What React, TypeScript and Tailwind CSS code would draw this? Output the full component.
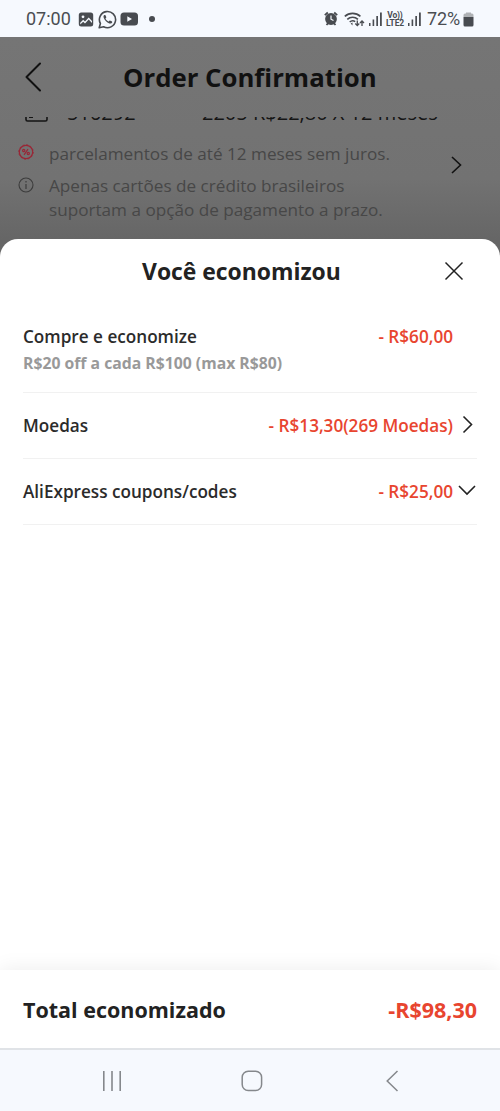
import React from 'react';

interface SavingRow {
    label: string;
    note?: string;
    amount: string;
    arrow?: 'right' | 'down';
    height: string;
}

const ROWS: SavingRow[] = [
    { label: 'Compre e economize', note: 'R$20 off a cada R$100 (max R$80)', amount: '- R$60,00', height: 'h-[90px] pt-[4px]' },
    { label: 'Moedas', amount: '- R$13,30(269 Moedas)', arrow: 'right', height: 'h-[66px] pb-[1px]' },
    { label: 'AliExpress coupons/codes', amount: '- R$25,00', arrow: 'down', height: 'h-[66px] pb-[1px]' },
];

const SignalBars: React.FC = () => (
    <svg width="13" height="14" viewBox="0 0 13 14" fill="#4a4d52">
        <rect x="0" y="11" width="1.5" height="3" />
        <rect x="3.6" y="7.5" width="1.6" height="6.5" />
        <rect x="7.3" y="4" width="1.7" height="10" />
        <rect x="11" y="0.5" width="1.8" height="13.5" />
    </svg>
);

const StatusBar: React.FC = () => (
    <header className="flex h-[37px] shrink-0 items-center bg-[#f6f9fe] pr-[26px] pl-[26px] font-['Roboto',sans-serif] text-[#4a4d52]">
        <span className="w-[52px] text-[18px]">07:00</span>
        <svg className="mt-[1px]" width="16" height="15" viewBox="0 0 16 15">
            <rect x="0.8" y="0.5" width="14.4" height="14" rx="2.5" fill="#484b50" />
            <circle cx="5" cy="4.8" r="1.4" fill="#f6f9fe" />
            <path d="M2.2 10.8 5.2 7.8 7 9.4 10.7 5.4 14 9V12.5H2.2Z" fill="#f6f9fe" />
            <path d="M2.2 12.5 5.2 9.8 7 11.4 10.7 7.4 14 11V13H2.2Z" fill="#484b50" />
        </svg>
        <svg className="mt-[1px] ml-[4px]" width="19" height="19" viewBox="0 0 19 19" fill="none">
            <path d="M1.2 17.8 2.4 13.5A8.1 8.1 0 1 1 5.6 16.7Z" stroke="#484b50" strokeWidth="1.6" strokeLinejoin="round" />
            <path d="M6.3 5.1c-.9.6-1 1.8-.5 3 1 2.5 3 4.5 5.5 5.4 1.4.4 2.7-.2 3-1.5 0-.6-2-1.6-2.5-1.6-.6 0-.8 1.1-1.3 1.1-1-.3-2.6-1.8-3-2.9 0-.5.8-.7.8-1.3 0-.5-.8-2.2-1.2-2.3Z" fill="#484b50" />
        </svg>
        <svg className="ml-[3px]" width="19" height="14" viewBox="0 0 19 14">
            <rect x="0.5" y="0.5" width="17.5" height="13" rx="3.5" fill="#484b50" />
            <path d="M7.3 4.2 12 7 7.3 9.8Z" fill="#f6f9fe" />
        </svg>
        <span className="ml-[10px] size-[6px] rounded-full bg-[#484b50]" />

        <svg className="ml-auto" width="14" height="15" viewBox="0 0 14 15">
            <circle cx="7" cy="8" r="5.9" fill="#484b50" />
            <path d="M0.8 4.2 3.8 1.5M13.2 4.2 10.2 1.5M2.5 14 4 12.4M11.5 14 10 12.4" stroke="#484b50" strokeWidth="1.8" />
            <path d="M7 4.5V8.2L9.5 9.5" stroke="#f6f9fe" strokeWidth="1.2" fill="none" />
        </svg>
        <svg className="mt-[1px] ml-[6px]" width="21" height="16" viewBox="0 0 21 16" fill="none" stroke="#484b50">
            <path d="M0.8 5.4a11.5 11.5 0 0 1 15.6 0M3.3 8.3a7.8 7.8 0 0 1 10.6 0M5.7 11a4.5 4.5 0 0 1 5.5-.4" strokeWidth="1.6" />
            <path d="M8.5 11.5 6.7 12.5 8.5 14.5Z" fill="#484b50" stroke="none" />
            <path d="M13.3 9.5V14.5M11.3 12.5 13.3 14.6 15.3 12.5M18 15V10M16 12 18 9.9 20 12" strokeWidth="1.3" />
        </svg>
        <div className="ml-[4px]"><SignalBars /></div>
        <div className="mt-[1px] ml-[3px] flex w-[20px] flex-col items-center text-[8.5px] leading-[8px] font-bold tracking-[-0.2px]">
            <span>Vo))</span>
            <span>LTE2</span>
        </div>
        <div className="ml-[3px]"><SignalBars /></div>
        <span className="ml-[6px] w-[36px] text-[18px] tracking-[-0.1px]">72%</span>
        <svg className="mt-[1px]" width="11" height="15" viewBox="0 0 11 15">
            <path d="M3 1.5V.5H8V1.5H9A1.5 1.5 0 0 1 10.5 3V5H.5V3A1.5 1.5 0 0 1 2 1.5Z" fill="#afb2b5" />
            <path d="M.5 5H10.5V13A1.5 1.5 0 0 1 9 14.5H2A1.5 1.5 0 0 1 .5 13Z" fill="#484b50" />
        </svg>
    </header>
);

const OrderBackdrop: React.FC = () => (
    <section className="flex h-[202px] shrink-0 flex-col bg-linear-to-b from-[#757575] via-[#727272] via-70% to-[#666666]">
        <div className="flex h-[80px] shrink-0 items-center pl-[24px]">
            <svg width="19" height="30" viewBox="0 0 19 30" fill="none" stroke="#111" strokeWidth="2" strokeLinecap="round" strokeLinejoin="round">
                <path d="M16 1.5 2.5 15 16 28.5" />
            </svg>
            <h1 className="mt-[1px] ml-[80px] text-[25.75px] font-bold whitespace-nowrap text-[#111]">Order Confirmation</h1>
        </div>
        {/* Card row scrolled halfway under the title bar */}
        <div className="flex h-[10px] shrink-0 items-end overflow-hidden pl-[17px] text-[20px] leading-[16px] text-[#151515]">
            <svg className="shrink-0" width="38" height="16" viewBox="0 0 38 16" fill="none" stroke="#151515">
                <rect x="9" y="-2" width="21" height="12" rx="1.5" strokeWidth="1.6" />
                <path d="M12 6.5H16" strokeWidth="1" />
            </svg>
            <span className="mb-[6px] ml-[12px] w-[135px] shrink-0">516292</span>
            <span className="mb-[6px] whitespace-nowrap">2205 R$22,80 X 12 meses</span>
        </div>
        <div className="flex text-[17.15px] leading-[24px] text-[#474747]">
            <div className="w-[432px] pt-[15px] pl-[18px]">
                <div className="flex">
                    <svg className="mt-[2px]" width="16" height="16" viewBox="0 0 16 16" fill="none" stroke="#9a2636">
                        <circle cx="8" cy="8" r="6.7" strokeWidth="1.2" />
                        <circle cx="8" cy="8" r="7.2" strokeWidth="0.9" strokeDasharray="2 1.77" />
                        <path d="M6 10.8 10 5.2" strokeWidth="1.2" />
                        <circle cx="5.7" cy="6.5" r="1.1" strokeWidth="1.2" />
                        <circle cx="10.3" cy="9.5" r="1.1" strokeWidth="1.2" />
                    </svg>
                    <p className="ml-[15px] whitespace-nowrap">parcelamentos de até 12 meses sem juros.</p>
                </div>
                <div className="mt-[8px] flex">
                    <svg className="mt-[3px]" width="16" height="16" viewBox="0 0 16 16" fill="none" stroke="#3c3c3c">
                        <circle cx="8" cy="8" r="7" strokeWidth="1.1" />
                        <path d="M8 7V12M8 4V5.5" strokeWidth="1.2" />
                    </svg>
                    <p className="ml-[15px] whitespace-nowrap">
                        Apenas cartões de crédito brasileiros<br />
                        suportam a opção de pagamento a prazo.
                    </p>
                </div>
            </div>
            <svg className="mt-[28px] ml-[18px]" width="13" height="20" viewBox="0 0 13 20" fill="none" stroke="#111" strokeWidth="1.6">
                <path d="M2 2 10.5 10 2 18" />
            </svg>
        </div>
    </section>
);

const Arrow: React.FC<{ direction: 'right' | 'down' }> = ({ direction }) => (
    <svg width="20" height="20" viewBox="0 0 20 20" fill="none" stroke="#222" strokeWidth="1.6">
        <path d={direction === 'right' ? 'M6.5 1.5 14.5 9.5 6.5 17.5' : 'M2 5 10 13 18 5'} />
    </svg>
);

const SavingsSheet: React.FC = () => (
    <main className="flex flex-1 flex-col bg-[#666666]">
        <div className="flex flex-1 flex-col overflow-hidden rounded-t-[18px] bg-white">
            <div className="flex h-[64px] shrink-0 items-center pl-[142px]">
                <h2 className="mt-[2px] w-[302px] text-[22.9px] font-bold whitespace-nowrap text-[#222]">Você economizou</h2>
                <svg width="20" height="20" viewBox="0 0 20 20" fill="none" stroke="#222" strokeWidth="1.5">
                    <path d="M1.5 1.5 18.5 18.5M18.5 1.5 1.5 18.5" />
                </svg>
            </div>
            <div className="flex-1 px-[23px]">
                {ROWS.map(row => (
                    <div key={row.label} className={`flex flex-col justify-center border-b border-[#f1f1f1] ${row.height}`}>
                        <div className="flex items-center text-[17.15px] leading-[27px] font-semibold whitespace-nowrap">
                            <span className="text-[#2b2b2b]">{row.label}</span>
                            <span className="ml-auto text-[#e8452f]">{row.amount}</span>
                            <span className="ml-[4px] size-[20px]">{row.arrow && <Arrow direction={row.arrow} />}</span>
                        </div>
                        {row.note && <p className="text-[15.75px] leading-[27px] font-bold text-[#999]">{row.note}</p>}
                    </div>
                ))}
            </div>
            <footer className="flex h-[78px] shrink-0 items-center justify-between px-[23px] pt-[3px] font-bold whitespace-nowrap shadow-[0_0_20px_rgba(0,0,0,0.08)]">
                <span className="text-[21.5px] text-[#222]">Total economizado</span>
                <span className="text-[21.5px] text-[#e8452f]">-R$98,30</span>
            </footer>
        </div>
    </main>
);

const NavigationBar: React.FC = () => (
    <nav className="flex h-[63px] shrink-0 items-center border-t-2 border-[#e0e3e7] bg-[#f6f9fe]">
        <svg className="ml-[102px]" width="20" height="20" viewBox="0 0 20 20" stroke="#85888c" strokeWidth="1.6">
            <path d="M1.8 0V20M10 0V20M18.2 0V20" />
        </svg>
        <svg className="ml-[119px]" width="22" height="22" viewBox="0 0 22 22" fill="none" stroke="#85888c" strokeWidth="1.5">
            <rect x="1.2" y="1.2" width="19.4" height="19.4" rx="6" />
        </svg>
        <svg className="ml-[122px]" width="14" height="22" viewBox="0 0 14 22" fill="none" stroke="#85888c" strokeWidth="1.5">
            <path d="M12.5 1 2.2 11 12.5 21" />
        </svg>
    </nav>
);

const App: React.FC = () => (
    <div className="flex h-[1111px] w-[500px] flex-col overflow-hidden bg-white font-['Open_Sans',sans-serif]">
        <StatusBar />
        <OrderBackdrop />
        <SavingsSheet />
        <NavigationBar />
    </div>
);

export default App;
